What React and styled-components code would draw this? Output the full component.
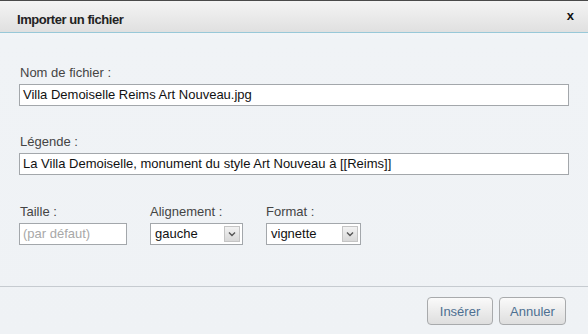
import styled, { createGlobalStyle } from "styled-components";

const GlobalStyle = createGlobalStyle`
  html, body {
    margin: 0;
    padding: 0;
    background: #f0f3f6;
  }
  * {
    box-sizing: border-box;
  }
`;

const Dialog = styled.div`
  width: 588px;
  height: 334px;
  display: flex;
  flex-direction: column;
  font-family: "Liberation Sans", Arial, sans-serif;
  font-size: 13px;
  color: #333;
  background: linear-gradient(to bottom, #fbfdfe 0px, #f0f3f6 40px, #eff2f5 100%);
`;

const TitleBar = styled.div`
  height: 33px;
  flex: none;
  display: flex;
  align-items: flex-start;
  justify-content: space-between;
  padding: 11px 14px 0 17px;
  border-top: 1px solid #4a4a4a;
  border-bottom: 1px solid #98c8d8;
  background: linear-gradient(to bottom, #f4f4f4, #e0e0e0);
`;

const Title = styled.h1`
  margin: 0;
  font-size: 13px;
  line-height: 16px;
  letter-spacing: -0.45px;
  font-weight: bold;
  color: #222;
`;

const Close = styled.span`
  font-size: 13px;
  line-height: 13px;
  font-weight: bold;
  color: #111;
  margin-top: -3px;
  cursor: pointer;
`;

const Body = styled.div`
  flex: 1;
  padding: 32px 19px 0 19px;
  display: flex;
  flex-direction: column;
  gap: 28px;
`;

const Field = styled.div`
  display: flex;
  flex-direction: column;
  width: ${(p) => p.$width || "auto"};
`;

const Label = styled.label`
  line-height: 16px;
  margin: 0 0 3px 1px;
  color: #444;
`;

const TextInput = styled.div`
  height: 22px;
  width: ${(p) => p.$width || "100%"};
  border: 1px solid #a3a7ab;
  background: #fff;
  padding: 0 3px;
  line-height: 20px;
  color: ${(p) => (p.$placeholder ? "#a8a8a8" : "#111")};
  white-space: nowrap;
  overflow: hidden;
`;

const Row = styled.div`
  display: flex;
  align-items: flex-start;
  margin-top: 1px;
`;

const Select = styled.div`
  height: 22px;
  width: ${(p) => p.$width};
  margin-left: 1px;
  display: flex;
  align-items: center;
  border: 1px solid #a3a7ab;
  background: #fff;
  padding: 0 2px 0 4px;
  color: #111;
`;

const SelectText = styled.span`
  flex: 1;
  line-height: 20px;
`;

const Arrow = styled.span`
  width: 16px;
  height: 16px;
  display: flex;
  align-items: center;
  justify-content: center;
  border: 1px solid #c4c4c4;
  background: linear-gradient(to bottom, #f2f2f2, #d8d8d8);
`;

const Footer = styled.div`
  height: 48px;
  flex: none;
  border-top: 1px solid #c6cbd0;
  display: flex;
  justify-content: flex-end;
  align-items: flex-start;
  gap: 6px;
  padding: 10px 22px 0 0;
`;

const Button = styled.button`
  height: 28px;
  width: ${(p) => p.$width};
  font-family: "Liberation Sans", Arial, sans-serif;
  font-size: 13px;
  color: #4d6f91;
  border: 1px solid #a8aaac;
  border-radius: 4px;
  background: linear-gradient(to bottom, #fafafa, #dedede);
  padding: 0;
  cursor: pointer;
`;

function Chevron() {
  return (
    <svg width="8" height="6" viewBox="0 0 8 6">
      <path d="M1 1.5 L4 4.5 L7 1.5" fill="none" stroke="#555" strokeWidth="1.4" />
    </svg>
  );
}

export default function App() {
  return (
    <Dialog>
      <GlobalStyle />
      <TitleBar>
        <Title>Importer un fichier</Title>
        <Close>x</Close>
      </TitleBar>
      <Body>
        <Field>
          <Label>Nom de fichier :</Label>
          <TextInput>Villa Demoiselle Reims Art Nouveau.jpg</TextInput>
        </Field>
        <Field>
          <Label>Légende :</Label>
          <TextInput>La Villa Demoiselle, monument du style Art Nouveau à [[Reims]]</TextInput>
        </Field>
        <Row>
          <Field $width="130px">
            <Label>Taille :</Label>
            <TextInput $width="108px" $placeholder>
              (par défaut)
            </TextInput>
          </Field>
          <Field $width="116px">
            <Label>Alignement :</Label>
            <Select $width="93px">
              <SelectText>gauche</SelectText>
              <Arrow>
                <Chevron />
              </Arrow>
            </Select>
          </Field>
          <Field $width="100px">
            <Label>Format :</Label>
            <Select $width="95px">
              <SelectText>vignette</SelectText>
              <Arrow>
                <Chevron />
              </Arrow>
            </Select>
          </Field>
        </Row>
      </Body>
      <Footer>
        <Button $width="66px">Insérer</Button>
        <Button $width="67px">Annuler</Button>
      </Footer>
    </Dialog>
  );
}
